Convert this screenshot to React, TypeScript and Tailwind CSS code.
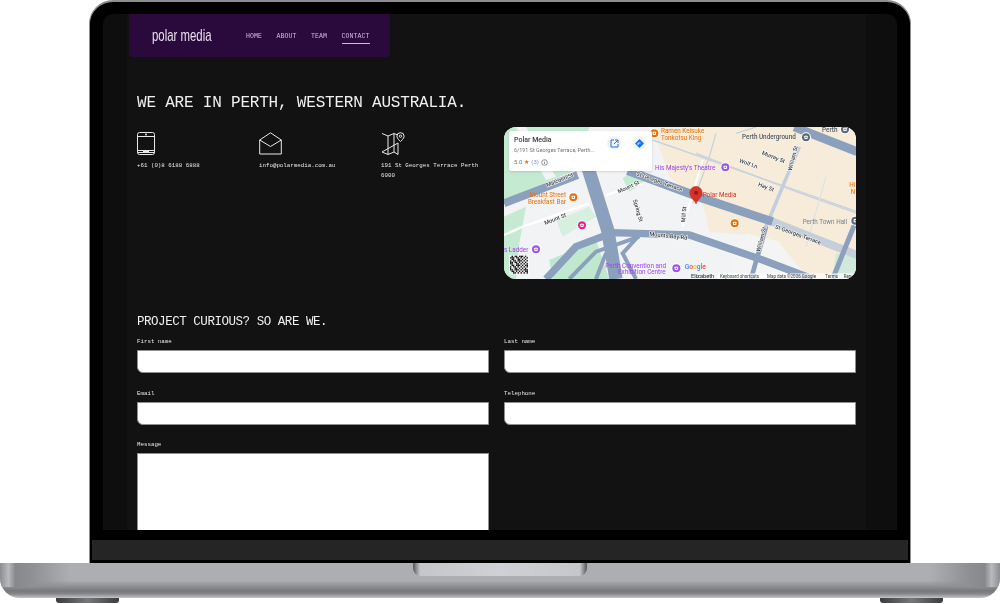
const mono = "font-['Liberation_Mono',monospace]";

/* --------------------------------------
   Contact icons
---------------------------------------*/
const TabletIcon = () => (
  <svg width="18" height="23" viewBox="0 0 18 23" fill="none" stroke="#e8e8e8" strokeWidth="1">
    <rect x="0.5" y="0.5" width="17" height="22" rx="2" />
    <path d="M0.5 4.5h17M0.5 18.5h17M0.5 20.5h17" />
    <circle cx="9" cy="2.5" r="1" fill="#e8e8e8" stroke="none" />
    <path d="M6 19.5h6" strokeWidth="1.4" />
  </svg>
);

const MailIcon = () => (
  <svg width="23" height="23" viewBox="0 0 23 23" fill="none" stroke="#e8e8e8" strokeWidth="1">
    <path d="M0.7 8 11.5 0.8 22.3 8v14H0.7z" />
    <path d="M0.7 8 11.5 14.5 22.3 8" />
  </svg>
);

const MapIcon = () => (
  <svg width="24" height="24" viewBox="0 0 24 24" fill="none" stroke="#e8e8e8" strokeWidth="1">
    <path d="M1 1.5 7 4l6-2.5 3 1.2M17 11v11.5L13 20l-6 2.5L1 20z" />
    <path d="M7 4v18.5M13 1.5V20" />
    <path d="M19.5 0.7a3.6 3.6 0 0 1 3.6 3.6c0 2.2-3.6 5.2-3.6 5.2s-3.6-3-3.6-5.2a3.6 3.6 0 0 1 3.6-3.6z" />
    <circle cx="19.5" cy="4.2" r="1.2" />
  </svg>
);

/* --------------------------------------
   Map drawing, in units of 1/3 px
---------------------------------------*/
const RoadLabel = ({ x, y, angle, children }: { x: number; y: number; angle: number; children: string }) => (
  <text
    x={x}
    y={y}
    transform={`rotate(${angle} ${x} ${y})`}
    textAnchor="middle"
    dominantBaseline="middle"
    fontSize="17"
    fontWeight="500"
    fill="#3c4043"
    stroke="#ffffff"
    strokeWidth="3"
    paintOrder="stroke"
  >
    {children}
  </text>
);

const Poi = ({ x, y, color }: { x: number; y: number; color: string }) => (
  <g>
    <circle cx={x} cy={y} r="15" fill="#ffffff" />
    <circle cx={x} cy={y} r="12" fill={color} />
    <rect x={x - 5} y={y - 5} width="10" height="10" rx="2" fill="#ffffff" />
    <rect x={x - 2} y={y - 2} width="4" height="4" fill={color} />
  </g>
);

const qrCells = Array.from({ length: 144 }, (_, i) => ((i * 37 + (i % 7) * 11) % 5 < 2 ? 1 : 0));

const MapView = () => (
  <svg viewBox="24 21 1059 456" className="w-[353px] h-[152px] block font-['Roboto',sans-serif]">
    <rect x="24" y="21" width="1059" height="456" fill="#f2f3f5" />

    {/* blocks and parks */}
    <path d="M470 21H1083V477H940L850 370 750 345 640 335 620 250 520 170z" fill="#f6ecd9" />
    <path d="M750 340 850 365 900 470 720 477 700 400z" fill="#f4f4f5" />
    <path d="M24 21H280L240 150 24 240z" fill="#c4ead2" />
    <path d="M90 21 180 170 150 180 60 21z" fill="#f2f3f5" />
    <path d="M380 175 420 145 445 185 400 215z" fill="#c4ead2" />
    <path d="M24 290 90 260 70 370 60 477H24z" fill="#c4ead2" />
    <path d="M160 420 300 360 340 477H170z" fill="#c0e8cf" />
    <path d="M180 300 280 260 300 290 200 350z" fill="#d6efdf" />
    <path d="M1020 400 1083 410V477H1010z" fill="#cfeadb" />

    {/* minor streets */}
    <g fill="none" stroke="#c9d1dc" strokeWidth="4">
      <path d="M470 60 1083 275" />
      <path d="M600 100 900 215 1083 280" />
      <path d="M660 40 640 110 590 250" />
      <path d="M24 345 80 320 280 250" strokeWidth="7" stroke="#ffffff" />
      <path d="M330 225 440 190" strokeWidth="7" stroke="#ffffff" />
      <path d="M930 380 990 170" stroke="#dfe2e6" />
      <path d="M620 120 560 320" stroke="#ffffff" strokeWidth="7" />
      <path d="M720 40 780 21" />
    </g>
    <path d="M910 80 810 320" fill="none" stroke="#c3cedd" strokeWidth="11" />
    <path d="M830 305 1083 405" fill="none" stroke="#c5ced9" strokeWidth="24" />

    {/* main roads */}
    <g fill="none" stroke="#8ba0bc">
      <path d="M24 250 245 165" strokeWidth="24" />
      <path d="M275 140 335 330 360 477" strokeWidth="40" />
      <path d="M395 152 620 235 830 305" strokeWidth="26" />
      <path d="M150 477 240 380 350 338 580 345 800 420 950 477" strokeWidth="22" />
      <path d="M220 477 300 395 430 350" strokeWidth="12" />
      <path d="M300 477 330 400" strokeWidth="12" />
      <path d="M420 477 380 400 430 345" strokeWidth="12" />
      <path d="M895 21 1083 95" strokeWidth="26" />
      <path d="M1083 295 1010 477" strokeWidth="15" />
      <path d="M810 320 765 477" strokeWidth="14" />
    </g>

    <RoadLabel x={192} y={181} angle={-22}>Malcolm St</RoadLabel>
    <RoadLabel x={398} y={202} angle={-25}>Mount St</RoadLabel>
    <RoadLabel x={178} y={298} angle={-22}>Mount St</RoadLabel>
    <RoadLabel x={425} y={272} angle={74}>Spring St</RoadLabel>
    <RoadLabel x={565} y={283} angle={-85}>Mill St</RoadLabel>
    <RoadLabel x={517} y={349} angle={6}>Mounts Bay Rd</RoadLabel>
    <RoadLabel x={797} y={358} angle={-76}>William St</RoadLabel>
    <RoadLabel x={892} y={115} angle={-76}>William St</RoadLabel>
    <RoadLabel x={490} y={186} angle={20}>St Georges Terrace</RoadLabel>
    <RoadLabel x={906} y={345} angle={20}>St Georges Terrace</RoadLabel>
    <RoadLabel x={832} y={112} angle={22}>Murray St</RoadLabel>
    <RoadLabel x={757} y={132} angle={20}>Wolf Ln</RoadLabel>
    <RoadLabel x={810} y={202} angle={20}>Hay St</RoadLabel>

    {/* places */}
    <Poi x={475} y={40} color="#e8710a" />
    <Poi x={232} y={232} color="#e8710a" />
    <Poi x={716} y={310} color="#e8710a" />
    <Poi x={258} y={316} color="#e52592" />
    <Poi x={688} y={142} color="#a256e8" />
    <Poi x={120} y={388} color="#a256e8" />
    <Poi x={541} y={445} color="#a256e8" />
    <Poi x={930} y={52} color="#5f6b7a" />
    <Poi x={1047} y={28} color="#5f6b7a" />
    <Poi x={1078} y={302} color="#5f6b7a" />

    <g fontSize="19">
      <g fill="#e8710a">
        <text x="495" y="39">Ramen Keisuke</text>
        <text x="495" y="59">Tonkotsu King</text>
        <text x="210" y="231" textAnchor="end">Mount Street</text>
        <text x="210" y="251" textAnchor="end">Breakfast Bar</text>
        <text x="1060" y="200">Hi</text>
        <text x="1064" y="221">N</text>
      </g>
      <g fill="#a142f4">
        <text x="477" y="149">His Majesty's Theatre</text>
        <text x="24" y="396">s Ladder</text>
        <text x="328" y="443">Perth Convention and</text>
        <text x="366" y="463">Exhibition Centre</text>
      </g>
      <text x="620" y="231" fill="#d93025">Polar Media</text>
      <text x="738" y="58" fill="#4f5b67" fontWeight="500">Perth Underground</text>
      <text x="978" y="36" fill="#4f5b67" fontWeight="500">Perth</text>
      <text x="920" y="311" fill="#78838f">Perth Town Hall</text>
      <text x="585" y="474" fill="#3c4043" fontWeight="500" fontSize="17">Elizabeth</text>
    </g>

    {/* marker */}
    <path
      d="M600 252c-4-12-19-20-19-34a19 19 0 0 1 38 0c0 14-15 22-19 34z"
      fill="#d9322a"
      stroke="#b3261e"
      strokeWidth="1"
    />
    <circle cx="600" cy="218" r="6" fill="#8f1d16" />

    {/* google mark */}
    <text x="566" y="448" fontSize="20" fontWeight="500">
      <tspan fill="#4285f4">G</tspan>
      <tspan fill="#ea4335">o</tspan>
      <tspan fill="#fbbc05">o</tspan>
      <tspan fill="#4285f4">g</tspan>
      <tspan fill="#34a853">l</tspan>
      <tspan fill="#ea4335">e</tspan>
    </text>

    {/* street view thumbnail */}
    <rect x="40" y="405" width="58" height="58" fill="#ffffff" />
    <g transform="translate(42 407)">
      {qrCells.map((on, i) => (
        <rect
          key={i}
          x={(i % 12) * 4.5}
          y={Math.floor(i / 12) * 4.5}
          width="4.5"
          height="4.5"
          fill={on ? "#e4e4e4" : "#1c1c1c"}
        />
      ))}
    </g>

    {/* attribution */}
    <rect x="665" y="460" width="418" height="17" fill="#ffffff" fillOpacity="0.7" />
    <g fontSize="13.5" fill="#3c4043">
      <text x="672" y="473">Keyboard shortcuts</text>
      <text x="813" y="473">Map data ©2026 Google</text>
      <text x="988" y="473">Terms</text>
      <text x="1043" y="473">Report</text>
    </g>
  </svg>
);

const MapCard = () => (
  <div className="absolute left-[5px] top-[4px] w-[143px] h-[40px] bg-white rounded-[2px] shadow-sm px-[5px] pt-[5px] flex justify-between font-['Roboto',sans-serif]">
    <div className="flex flex-col">
      <span className="text-[7px] leading-[9px] font-medium text-[#3c4043]">Polar Media</span>
      <span className="text-[5.4px] leading-[9px] mt-px text-[#70757a]">6/191 St Georges Terrace, Perth...</span>
      <div className="flex items-center gap-[2px] mt-[3px] text-[6px] leading-[8px] text-[#70757a]">
        <span>5.0</span>
        <span className="text-[#e8710a]">★</span>
        <span className="text-[#6f8fd0]">(3)</span>
        <svg width="7" height="7" viewBox="0 0 7 7" fill="none" stroke="#5f6368" strokeWidth="0.7">
          <circle cx="3.5" cy="3.5" r="2.8" />
          <path d="M3.5 3v2M3.5 1.8v.6" />
        </svg>
      </div>
    </div>
    <div className="flex gap-[11px] mr-[1px]">
      <div className="w-[14px] h-[14px] rounded-full bg-[#f1f3f4] flex items-center justify-center">
        <svg width="9" height="9" viewBox="0 0 9 9" fill="none" stroke="#1a73e8" strokeWidth="1">
          <path d="M4 1H1v7h7V5M5 1h3v3M8 1 4 5" />
        </svg>
      </div>
      <div className="w-[14px] h-[14px] rounded-full bg-[#f1f3f4] flex items-center justify-center">
        <svg width="9" height="9" viewBox="0 0 9 9">
          <path d="M4.5 0 9 4.5 4.5 9 0 4.5z" fill="#1a73e8" />
          <path d="M3 6V4h2.5" fill="none" stroke="#ffffff" strokeWidth="0.8" />
        </svg>
      </div>
    </div>
  </div>
);

/* --------------------------------------
   Form field
---------------------------------------*/
const Field = ({ label }: { label: string }) => (
  <label className="flex flex-col gap-[4px]">
    <span className="text-[5.8px] leading-[9px] text-[#e8e8e8]">{label}</span>
    <input className="w-full h-[23px] bg-white border border-[#8f8f8f] rounded-bl-[6px]" />
  </label>
);

const Contact = ({ icon, children }: { icon: React.ReactNode; children: React.ReactNode }) => (
  <div className="flex flex-col">
    <div className="h-[23px] mt-[5px]">{icon}</div>
    <p className="mt-[6px] text-[5.8px] leading-[10px] text-[#e8e8e8]">{children}</p>
  </div>
);

const NavLink = ({ children, active }: { children: string; active?: boolean }) => (
  <span className={`flex items-center h-[16px] pt-[3px] border-b ${active ? "border-[#d6b4f0]" : "border-transparent"} tracking-[0.1px]`}>
    {children}
  </span>
);

/* --------------------------------------
   Page shown inside the laptop
---------------------------------------*/
const Site = () => (
  <div className="h-[516px] rounded-t-[10px] overflow-hidden bg-[#0e0e0e] blur-[0.35px]">
    <div className={`ml-[24px] w-[739px] h-full bg-[#121212] ${mono}`}>
      <nav className="ml-[2px] w-[261px] h-[43px] bg-[#2a0a3c] rounded-b-[4px] flex items-center pl-[23px]">
        <span className="w-[94px] text-[17px] text-[#e8e0ee] font-['Liberation_Sans',sans-serif] origin-left scale-x-[0.67] whitespace-nowrap">
          polar media
        </span>
        <div className={`flex gap-[14.5px] text-[6.5px] text-[#d6b4f0] ${mono}`}>
          <NavLink>HOME</NavLink>
          <NavLink>ABOUT</NavLink>
          <NavLink>TEAM</NavLink>
          <NavLink active>CONTACT</NavLink>
        </div>
      </nav>

      <div className="ml-[10px] w-[719px]">
        <h1 className="mt-[36px] text-[16px] leading-[20px] tracking-[-0.2px] text-[#f0f0f0] font-normal">
          WE ARE IN PERTH, WESTERN AUSTRALIA.
        </h1>

        <div className="mt-[14px] grid grid-cols-2 gap-x-[15px]">
          <div className="flex">
            <div className="w-[122px] shrink-0">
              <Contact icon={<TabletIcon />}>+61 (0)8 6188 6888</Contact>
            </div>
            <div className="w-[122px] shrink-0">
              <Contact icon={<MailIcon />}>info@polarmedia.com.au</Contact>
            </div>
            <div className="w-[100px] shrink-0">
              <Contact icon={<MapIcon />}>191 St Georges Terrace Perth 6000</Contact>
            </div>
          </div>
          <div className="relative h-[152px] rounded-[12px] overflow-hidden">
            <MapView />
            <MapCard />
          </div>
        </div>

        <h2 className="mt-[35px] text-[12.5px] leading-[16px] tracking-[-0.46px] text-[#f0f0f0] font-normal">
          PROJECT CURIOUS? SO ARE WE.
        </h2>

        <div className="mt-[7px] grid grid-cols-2 gap-x-[15px] gap-y-[16px]">
          <Field label="First name" />
          <Field label="Last name" />
          <Field label="Email" />
          <Field label="Telephone" />
        </div>

        <label className="mt-[15px] grid grid-cols-2 gap-x-[15px]">
          <span className="flex flex-col gap-[4px]">
            <span className="text-[5.8px] leading-[9px] text-[#e8e8e8]">Message</span>
            <textarea className="w-full h-[120px] bg-white border border-[#8f8f8f] resize-none block" />
          </span>
        </label>
      </div>
    </div>
  </div>
);

/* --------------------------------------
   Laptop
---------------------------------------*/
const Foot = () => (
  <div className="w-[63px] h-[5px] rounded-b-[3px] bg-[linear-gradient(90deg,#3c3c3e,#77787b_50%,#3c3c3e)]" />
);

export default function App() {
  return (
    <div className="w-[1000px] h-[604px] bg-white overflow-hidden flex flex-col">
      {/* Lid */}
      <div className="mx-[89px] h-[563px] bg-black border-x border-t-2 border-[#8e8e90] rounded-t-[24px] flex flex-col">
        <div className="mt-[12px] mx-[13px]">
          <Site />
        </div>
        <div className="mt-[10px] mx-[2px] h-[20px] bg-[#252525]" />
      </div>

      {/* Base */}
      <div className="relative h-[35px] rounded-b-[20px] overflow-hidden bg-[linear-gradient(180deg,#adaeb1_0%,#adaeb1_50%,#97989b_62%,#77787c_80%,#85868a_88%,#c4c5c8_100%)]">
        <div className="absolute left-0 top-0 w-[70px] h-[24px] bg-[linear-gradient(90deg,#8c8d90_0%,#b9babd_12%,#87888c_22%,#8f9094_45%,#adaeb100_100%)]" />
        <div className="absolute right-0 top-0 w-[70px] h-[24px] bg-[linear-gradient(270deg,#8c8d90_0%,#b9babd_12%,#87888c_22%,#8f9094_45%,#adaeb100_100%)]" />
        <div className="absolute left-[413px] top-0 w-[174px] h-[13px] rounded-b-[8px] bg-[linear-gradient(90deg,#55565a_0%,#c5c6ca_4%,#d0d1d6_50%,#c5c6ca_96%,#55565a_100%)]" />
      </div>

      {/* Feet */}
      <div className="flex justify-between pl-[56px] pr-[57px]">
        <Foot />
        <Foot />
      </div>
    </div>
  );
}
